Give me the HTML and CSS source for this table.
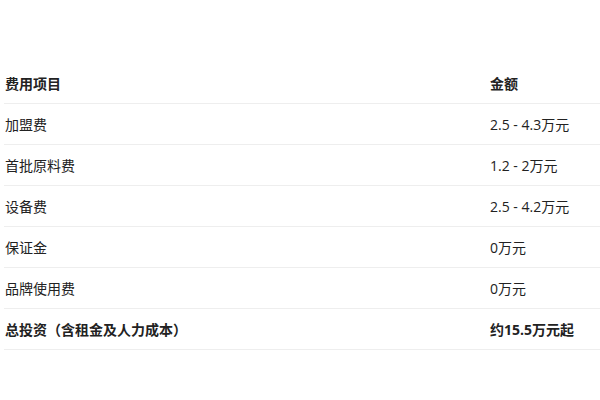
FILE: index.html
```html
<!DOCTYPE html>
<html lang="zh-CN">
<head>
    <meta charset="UTF-8">
    <title>费用明细</title>
    <link rel="stylesheet" href="styles.css">
</head>
<body>
    <div class="wrap">
        <table class="fee-table">
            <thead>
                <tr>
                    <th>费用项目</th>
                    <th class="amount">金额</th>
                </tr>
            </thead>
            <tbody>
                <tr><td>加盟费</td><td class="amount">2.5 - 4.3万元</td></tr>
                <tr><td>首批原料费</td><td class="amount">1.2 - 2万元</td></tr>
                <tr><td>设备费</td><td class="amount">2.5 - 4.2万元</td></tr>
                <tr><td>保证金</td><td class="amount">0万元</td></tr>
                <tr><td>品牌使用费</td><td class="amount">0万元</td></tr>
                <tr class="total"><td>总投资（含租金及人力成本）</td><td class="amount">约15.5万元起</td></tr>
            </tbody>
        </table>
    </div>
</body>
</html>
```

FILE: styles.css
```css
body {
    margin: 0;
    padding: 0;
    background: #fff;
    font-family: "Open Sans", "Noto Sans CJK SC", sans-serif;
    color: #222;
}
.wrap {
    padding: 63px 0 0 4px;
}
.fee-table {
    width: 100%;
    border-collapse: collapse;
    font-size: 14px;
}
.fee-table th, .fee-table td {
    text-align: left;
    height: 40px;
    padding: 0 0 0 1px;
    border-bottom: 1px solid #eee;
    vertical-align: middle;
}
.fee-table th {
    font-weight: bold;
}
.fee-table .amount {
    width: 110px;
}
.total td {
    font-weight: bold;
}
```
